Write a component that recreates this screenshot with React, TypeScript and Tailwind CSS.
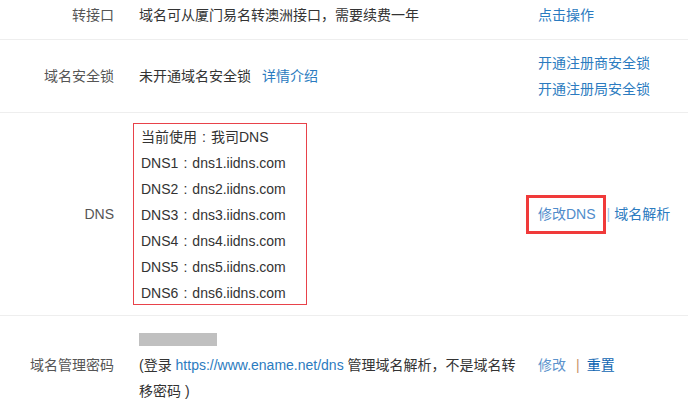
import React from "react";

const font = { fontFamily: '"Liberation Sans", "Noto Sans CJK SC", sans-serif' };

const dnsList = [
  "dns1.iidns.com",
  "dns2.iidns.com",
  "dns3.iidns.com",
  "dns4.iidns.com",
  "dns5.iidns.com",
  "dns6.iidns.com",
];

// full-width colon drawn centred, as the original font does
const Colon = () => <span className="inline-block w-[14px] text-center">:</span>;

function Row({
  label,
  className,
  children,
  action,
}: {
  label: string;
  className: string;
  children: React.ReactNode;
  action: React.ReactNode;
}) {
  return (
    <div
      className={`grid grid-cols-[126px_412px_1fr] items-center border-b border-[#eeeeee] leading-[26px] ${className}`}
    >
      <div className="pr-3 text-right text-[#555555]">{label}</div>
      <div className="pl-[13px] pr-[11px] text-[#333333]">{children}</div>
      <div>{action}</div>
    </div>
  );
}

export default function App() {
  return (
    <div className="w-[688px] h-[414px] overflow-hidden bg-white text-[14px]" style={font}>
      <Row
        label="转接口"
        className="pt-[2px] pb-[11px]"
        action={<a className="text-[#2b7bc0]">点击操作</a>}
      >
        域名可从厦门易名转澳洲接口，需要续费一年
      </Row>

      <Row
        label="域名安全锁"
        className="py-[10px]"
        action={
          <div className="flex flex-col">
            <a className="text-[#2b7bc0]">开通注册商安全锁</a>
            <a className="text-[#2b7bc0]">开通注册局安全锁</a>
          </div>
        }
      >
        未开通域名安全锁
        <a className="ml-[11px] text-[#2b7bc0]">详情介绍</a>
      </Row>

      <Row
        label="DNS"
        className="py-[10px]"
        action={
          <div className="flex items-center">
            <a className="-ml-[12px] flex h-[39px] items-center border-[3px] border-[#f03a3a] pl-[9px] pr-[7px] text-[#4f8ccb]">
              修改DNS
            </a>
            <span className="ml-[1px] text-[#9ec6e6]">|</span>
            <a className="ml-[4px] text-[#2b7bc0]">域名解析</a>
          </div>
        }
      >
        <div className="-ml-[6px] h-[182px] w-[174px] border border-[#e8424a] pl-[7px]">
          <div>
            当前使用<Colon />我司DNS
          </div>
          {dnsList.map((dns, i) => (
            <div key={dns}>
              DNS{i + 1}
              <Colon />
              {dns}
            </div>
          ))}
        </div>
      </Row>

      <Row
        label="域名管理密码"
        className="py-[10px] border-b-0"
        action={
          <div className="flex items-center">
            <a className="text-[#5b93cc]">修改</a>
            <span className="ml-[10px] text-[#c9946a]">|</span>
            <a className="ml-[7px] text-[#0f66b2]">重置</a>
          </div>
        }
      >
        <div className="flex h-[26px] items-center">
          <span className="inline-block h-[13px] w-[78px] bg-[#c0c0c0]" />
        </div>
        <div>
          (登录 <a className="text-[#2b7bc0]">https://www.ename.net/dns</a> 管理域名解析，不是域名转
          <br />
          移密码 )
        </div>
      </Row>
    </div>
  );
}
